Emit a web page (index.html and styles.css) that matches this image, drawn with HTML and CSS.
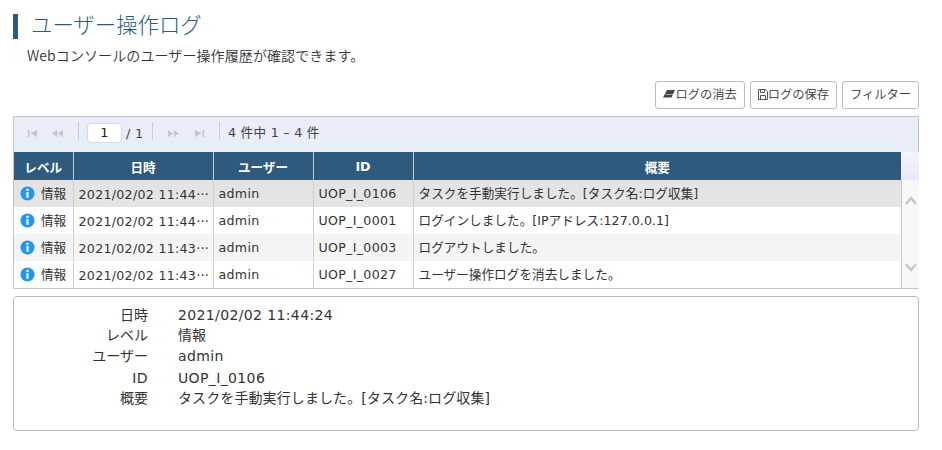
FILE: index.html
```html
<!DOCTYPE html>
<html lang="ja">
<head>
<meta charset="utf-8">
<title>ユーザー操作ログ</title>
<link rel="stylesheet" href="styles.css">
</head>
<body>
<main class="page">
  <h1 class="title">ユーザー操作ログ</h1>
  <p class="desc">Webコンソールのユーザー操作履歴が確認できます。</p>
  <div class="actions">
    <button class="btn"><svg class="btn-icon erase" viewBox="0 0 12 12"><path d="M4 2H12L8.500 9.500H0z" fill="#444"/><path d="M2.500 6.500H10" stroke="#fff" stroke-width=".5"/></svg>ログの消去</button>
    <button class="btn"><svg class="btn-icon save" viewBox="0 0 10 12"><path d="M.500 1.500h7l2 2v8h-9z M2.500 1.500v3h4v-3 M2.500 11.500v-4h5v4" fill="none" stroke="#555"/></svg>ログの保存</button>
    <button class="btn">フィルター</button>
  </div>
  <section class="grid">
    <div class="pager">
      <svg class="pg-icon first" viewBox="0 0 9 7"><path d="M0 0h1.500v7H0zM9 0v7L2.500 3.500z" fill="#c3c6ce"/></svg>
      <svg class="pg-icon prev" viewBox="0 0 11 7"><path d="M5.200 0v7L0 3.500zM11 0v7L5.800 3.500z" fill="#c3c6ce"/></svg>
      <span class="sep"></span>
      <span class="page-input">1</span>
      <span class="pg-total">/ 1</span>
      <span class="sep sep-b"></span>
      <svg class="pg-icon next" viewBox="0 0 11 7"><path d="M0 0v7l5.200-3.500zM5.800 0v7L11 3.500z" fill="#c3c6ce"/></svg>
      <svg class="pg-icon last" viewBox="0 0 9 7"><path d="M0 0v7l6.500-3.500zM7.500 0H9v7H7.500z" fill="#c3c6ce"/></svg>
      <span class="sep sep-c"></span>
      <span class="pg-info">4 件中 1 – 4 件</span>
    </div>
    <div class="grid-body">
      <table class="log">
        <colgroup><col class="c1"><col class="c2"><col class="c3"><col class="c4"><col></colgroup>
        <thead><tr><th>レベル</th><th>日時</th><th>ユーザー</th><th>ID</th><th>概要</th></tr></thead>
        <tbody>
          <tr class="selected"><td class="lvl"><svg class="info" viewBox="0 0 16 16"><circle cx="8" cy="8" r="7.500" fill="#2196f3"/><rect x="6.800" y="3" width="2.400" height="2.300" fill="#fff"/><rect x="6.800" y="6.500" width="2.400" height="6" fill="#fff"/></svg>情報</td><td class="latin">2021/02/02 11:44<span class="dots">…</span></td><td class="latin">admin</td><td class="latin">UOP_I_0106</td><td class="sum">タスクを手動実行しました。[タスク名:ログ収集]</td></tr>
          <tr><td class="lvl"><svg class="info" viewBox="0 0 16 16"><circle cx="8" cy="8" r="7.500" fill="#2196f3"/><rect x="6.800" y="3" width="2.400" height="2.300" fill="#fff"/><rect x="6.800" y="6.500" width="2.400" height="6" fill="#fff"/></svg>情報</td><td class="latin">2021/02/02 11:44<span class="dots">…</span></td><td class="latin">admin</td><td class="latin">UOP_I_0001</td><td class="sum">ログインしました。[IPアドレス:127.0.0.1]</td></tr>
          <tr class="alt"><td class="lvl"><svg class="info" viewBox="0 0 16 16"><circle cx="8" cy="8" r="7.500" fill="#2196f3"/><rect x="6.800" y="3" width="2.400" height="2.300" fill="#fff"/><rect x="6.800" y="6.500" width="2.400" height="6" fill="#fff"/></svg>情報</td><td class="latin">2021/02/02 11:43<span class="dots">…</span></td><td class="latin">admin</td><td class="latin">UOP_I_0003</td><td class="sum">ログアウトしました。</td></tr>
          <tr><td class="lvl"><svg class="info" viewBox="0 0 16 16"><circle cx="8" cy="8" r="7.500" fill="#2196f3"/><rect x="6.800" y="3" width="2.400" height="2.300" fill="#fff"/><rect x="6.800" y="6.500" width="2.400" height="6" fill="#fff"/></svg>情報</td><td class="latin">2021/02/02 11:43<span class="dots">…</span></td><td class="latin">admin</td><td class="latin">UOP_I_0027</td><td class="sum">ユーザー操作ログを消去しました。</td></tr>
        </tbody>
      </table>
      <div class="scroll">
        <div class="scroll-head"></div>
        <div class="scroll-track">
          <svg class="chev" viewBox="0 0 12 9"><path d="M1 8l5-6 5 6" fill="none" stroke="#c8c8c8" stroke-width="2.500"/></svg>
          <svg class="chev" viewBox="0 0 12 9"><path d="M1 1l5 6 5-6" fill="none" stroke="#c8c8c8" stroke-width="2.500"/></svg>
        </div>
      </div>
    </div>
  </section>
  <section class="detail">
    <dl class="detail-list">
      <dt>日時</dt><dd class="latin">2021/02/02 11:44:24</dd>
      <dt>レベル</dt><dd>情報</dd>
      <dt>ユーザー</dt><dd class="latin">admin</dd>
      <dt class="latin">ID</dt><dd class="latin">UOP_I_0106</dd>
      <dt>概要</dt><dd class="long">タスクを手動実行しました。[タスク名:ログ収集]</dd>
    </dl>
  </section>
</main>
</body>
</html>
```
FILE: styles.css
```css
* { box-sizing: border-box; }
html, body { margin: 0; background: #fff; }
body {
  font-family: "DejaVu Sans", "Noto Sans CJK JP", sans-serif;
  font-size: 14px;
  color: #333;
}
.page { width: 942px; padding: 14px 23px 0 13px; }
.title {
  margin: 0;
  height: 25px;
  border-left: 5px solid #2e5b7d;
  padding-left: 13px;
  font-family: "Noto Sans CJK JP", sans-serif;
  font-weight: 300;
  font-size: 21.4px;
  line-height: 20px;
  color: #2e5b7d;
}
.desc {
  margin: 7px 0 0 14px;
  height: 26px;
  line-height: 18px;
  font-size: 14px;
  letter-spacing: .1px;
  font-family: "Noto Sans CJK JP", sans-serif;
  font-weight: 350;
}
.actions { display: flex; justify-content: flex-end; gap: 5px; margin-top: 9px; }
.btn {
  height: 28px;
  padding: 0 7px 2px;
  background: #fff;
  border: 1px solid #bbb;
  border-radius: 3px;
  font-family: "Noto Sans CJK JP", sans-serif;
  font-weight: 350;
  font-size: 12.25px;
  color: #333;
  display: flex;
  align-items: center;
}
.btn-icon { height: 12px; flex: none; }
.erase { width: 12px; }
.save { width: 10px; }
.grid { margin-top: 7px; border: 1px solid #c4c4c4; border-radius: 1px; }
.pager {
  height: 35px;
  background: #e9edf8;
  display: flex;
  align-items: center;
  font-size: 12.6px;
  color: #444;
  padding-bottom: 3px;
}
.pg-icon { height: 7px; flex: none; }
.first { width: 9px; margin-left: 14px; }
.prev { width: 11px; margin-left: 15px; }
.next { width: 11px; margin-left: 15px; }
.last { width: 9px; margin-left: 16px; }
.sep { width: 1px; height: 18px; background: #c5c9ef; margin: 0 0 4px 15px; flex: none; }
.sep-b { margin-left: 8px; }
.sep-c { margin-left: 15px; }
.page-input {
  width: 35px;
  height: 20px;
  margin-left: 8px;
  background: #fff;
  border: 1px solid #d5d7f5;
  border-radius: 4px;
  text-align: center;
  line-height: 18px;
  font-size: 13px;
  color: #222;
}
.pg-total { width: 18px; margin-left: 4px; font-size: 13px; letter-spacing: .3px; }
.pg-info { margin: 0 0 3px 8px; font-size: 12.6px; letter-spacing: .3px; }
.grid-body { display: flex; }
.log { width: 887px; border-collapse: collapse; table-layout: fixed; font-size: 12.6px; flex: none; }
.c1 { width: 59px; }
.c2 { width: 140px; }
.c3 { width: 100px; }
.c4 { width: 100px; }
.log th {
  height: 28px;
  padding: 0;
  background: #2e5b7d;
  color: #fff;
  font-weight: 700;
  font-size: 12.6px;
  border-left: 1px solid #c4cdd6;
}
.log th:first-child, .log td:first-child { border-left: 0; }
.log td {
  height: 27px;
  padding: 0 4px 0 5px;
  border-left: 1px solid #d0d0d0;
  white-space: nowrap;
  overflow: hidden;
  color: #333;
}
.log td.latin { letter-spacing: .3px; }
.log td.lvl { padding: 0 0 2px 6px; }
.log td.sum { padding-bottom: 2px; letter-spacing: .05px; }
.dots { font-family: "Noto Sans CJK JP", sans-serif; letter-spacing: 0; }
.selected td { background: #e4e4e4; }
.alt td { background: #f4f4f4; }
.info { width: 15px; height: 15px; vertical-align: -3px; margin-right: 6px; }
.scroll { width: 18px; flex: none; border-left: 1px solid #c8c8c8; display: flex; flex-direction: column; }
.scroll-head { height: 28px; background: linear-gradient(#f4f5fc, #e8e8fb); margin-left: -1px; }
.scroll-track {
  flex: 1;
  background: #f8f8f8;
  display: flex;
  flex-direction: column;
  align-items: center;
  justify-content: space-between;
  padding: 16px 0 16px;
}
.chev { width: 12px; height: 9px; }
.detail {
  margin-top: 7px;
  height: 135px;
  border: 1px solid #bbb;
  border-radius: 4px;
  padding: 8px 0 0;
}
.detail-list {
  margin: 0;
  display: grid;
  grid-template-columns: 134px 1fr;
  column-gap: 30px;
  grid-template-rows: 20px 21px 22px 20px 21px;
  line-height: 21px;
}
.detail-list dt { text-align: right; }
.detail-list dd { margin: 0; }
.detail-list .latin { letter-spacing: .37px; }
.detail-list .long { letter-spacing: .1px; }
```
